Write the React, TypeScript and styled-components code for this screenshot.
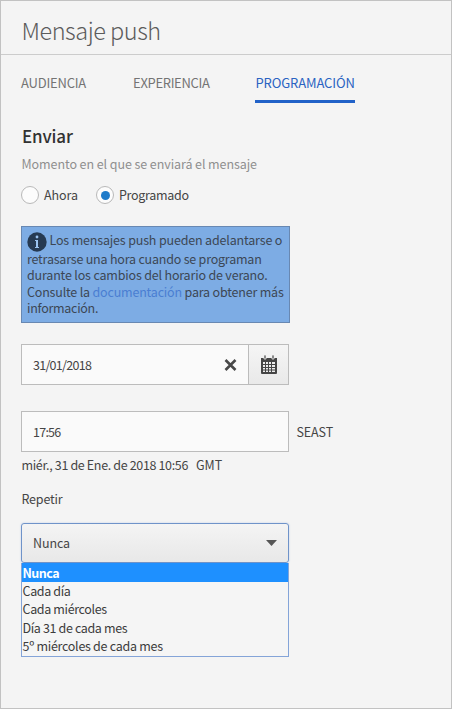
import React from "react";
import styled, { createGlobalStyle } from "styled-components";

const GlobalStyle = createGlobalStyle`
  *, *::before, *::after { box-sizing: border-box; }
  body {
    margin: 0;
    background: #f4f4f4;
    font-family: "Noto Sans CJK SC", "Source Sans Pro", "Noto Sans", sans-serif;
  }
`;

const Panel = styled.main`
  width: 452px;
  height: 709px;
  border: 1px solid #c2c2c2;
  background: #f4f4f4;
  color: #454545;
  font-size: 12.5px;
  line-height: 18px;
  overflow: hidden;
  white-space: nowrap;
`;

const Header = styled.header`
  height: 54px;
  padding: 12px 0 0 20.5px;
  border-bottom: 1px solid #cccccc;
`;

const Title = styled.h1`
  margin: 0;
  font-size: 23.5px;
  font-weight: 300;
  line-height: 34px;
  letter-spacing: -0.48px;
  color: #5c5c5c;
`;

const Tabs = styled.nav`
  display: flex;
  height: 49px;
  padding: 17px 0 0 20px;
`;

const Tab = styled.span<{ $active?: boolean; $gap: number; $tracking: number }>`
  height: 31px;
  margin-right: ${(p) => p.$gap}px;
  padding-top: 1px;
  border-bottom: ${(p) => (p.$active ? "3px solid #2162c8" : "none")};
  color: ${(p) => (p.$active ? "#2a63c2" : "#747474")};
  font-size: 13px;
  line-height: 20px;
  letter-spacing: ${(p) => p.$tracking}px;
`;

const Form = styled.section`
  display: flex;
  flex-direction: column;
  align-items: flex-start;
  padding: 20px 0 0 20px;
`;

const Heading = styled.h2`
  margin: 0 0 0 1px;
  font-size: 17px;
  font-weight: 500;
  line-height: 24px;
  letter-spacing: -0.15px;
  color: #323232;
`;

const Text = styled.span<{ $tracking?: number }>`
  letter-spacing: ${(p) => p.$tracking ?? 0}px;
`;

const Hint = styled.p`
  margin: 7px 0 0 0.5px;
  color: #8f8f8f;
  letter-spacing: -0.08px;
`;

const RadioGroup = styled.div`
  display: flex;
  height: 18px;
  margin-top: 13px;
`;

const Option = styled.label<{ $width: number }>`
  display: flex;
  width: ${(p) => p.$width}px;
  gap: 5px;
  line-height: 17px;
`;

const Radio = styled.span`
  display: flex;
  align-items: center;
  justify-content: center;
  flex: none;
  width: 18px;
  height: 18px;
  border: 1px solid #b9b9b9;
  border-radius: 50%;
  background: #fcfcfc;
`;

const Dot = styled.span`
  width: 9px;
  height: 9px;
  border-radius: 50%;
  background: #1e7bca;
`;

const Notice = styled.div`
  width: 269px;
  height: 97px;
  margin-top: 22px;
  padding: 4.5px 0 0 5px;
  border: 1px solid #6888b2;
  background: #7dace4;
  color: #3c4754;
  line-height: 16.4px;
`;

const NoticeLine = styled.div<{ $tracking: number; $first?: boolean }>`
  display: flex;
  height: ${(p) => (p.$first ? 19.4 : 16.4)}px;
  gap: ${(p) => (p.$first ? 2.5 : 0)}px;
  white-space: pre;
  letter-spacing: ${(p) => p.$tracking}px;
`;

const InfoIcon = styled.svg`
  display: block;
  flex: none;
`;

const Link = styled.a`
  color: #4a7ed2;
`;

const Field = styled.div<{ $top: number }>`
  display: flex;
  align-items: center;
  width: 268px;
  height: 41px;
  margin-top: ${(p) => p.$top}px;
  padding-left: 11px;
  border: 1px solid #bcbcbc;
  background: #fafafa;
`;

const ClearIcon = styled.svg`
  margin-left: auto;
  margin-right: 11px;
`;

const CalendarButton = styled.button`
  display: flex;
  align-items: center;
  justify-content: center;
  width: 40px;
  height: 39px;
  padding: 0;
  border: 0;
  border-left: 1px solid #bcbcbc;
  background: linear-gradient(#f5f5f5, #e9e9e9);
`;

const TimeRow = styled.div`
  display: flex;
  align-items: center;
  gap: 7.5px;
  margin-top: 26px;
`;

const Resolved = styled.div`
  display: flex;
  gap: 8px;
  margin: 4px 0 0 0.5px;
`;

const Label = styled.div`
  margin: 16px 0 0 0.5px;
  letter-spacing: -0.2px;
`;

const Select = styled.div`
  display: flex;
  align-items: center;
  justify-content: space-between;
  width: 268px;
  height: 40px;
  margin-top: 15px;
  padding: 0 11px;
  border: 1px solid #6f93c9;
  border-radius: 3px;
  background: linear-gradient(#f4f4f4, #e8e8e8);
  box-shadow: 0 0 2px #b9cbe7;
`;

const Menu = styled.ul`
  width: 268px;
  height: 94px;
  margin: 0;
  padding: 0;
  border: 1px solid #84a4d8;
  border-top: 0;
  background: #f5f5f5;
  list-style: none;
`;

const Item = styled.li<{ $selected?: boolean; $tracking: number }>`
  height: ${(p) => (p.$selected ? 19 : 18.4)}px;
  padding-left: 0.5px;
  color: ${(p) => (p.$selected ? "#ffffff" : "#3c3c3c")};
  background: ${(p) => (p.$selected ? "#1e90ff" : "transparent")};
  font-weight: ${(p) => (p.$selected ? 700 : 400)};
  line-height: ${(p) => (p.$selected ? 19 : 18)}px;
  letter-spacing: ${(p) => p.$tracking}px;
`;

const options = [
  { label: "Nunca", tracking: -0.5, selected: true },
  { label: "Cada día", tracking: -0.35 },
  { label: "Cada miércoles", tracking: -0.35 },
  { label: "Día 31 de cada mes", tracking: -0.36 },
  { label: "5º miércoles de cada mes", tracking: -0.28 },
];

export default function App() {
  return (
    <>
      <GlobalStyle />
      <Panel>
        <Header>
          <Title>Mensaje push</Title>
        </Header>
        <Tabs>
          <Tab $gap={47} $tracking={-0.2}>AUDIENCIA</Tab>
          <Tab $gap={46} $tracking={-0.34}>EXPERIENCIA</Tab>
          <Tab $active $gap={0} $tracking={-0.11}>PROGRAMACIÓN</Tab>
        </Tabs>
        <Form>
          <Heading>Enviar</Heading>
          <Hint>Momento en el que se enviará el mensaje</Hint>
          <RadioGroup>
            <Option $width={75}>
              <Radio />
              <Text $tracking={-0.1}>Ahora</Text>
            </Option>
            <Option $width={100}>
              <Radio><Dot /></Radio>
              <Text $tracking={-0.3}>Programado</Text>
            </Option>
          </RadioGroup>

          <Notice>
            <NoticeLine $first $tracking={-0.17}>
              <InfoIcon width="20" height="20" viewBox="0 0 20 20">
                <circle cx="10" cy="10" r="9.7" fill="#263a52" />
                <circle cx="10" cy="5" r="1.4" fill="#9bc3ef" />
                <path d="M8 8h3v7h1v1H8v-1h1V9H8z" fill="#9bc3ef" />
              </InfoIcon>
              <span>Los mensajes push pueden adelantarse o</span>
            </NoticeLine>
            <NoticeLine $tracking={-0.21}>retrasarse una hora cuando se programan</NoticeLine>
            <NoticeLine $tracking={-0.18}>durante los cambios del horario de verano.</NoticeLine>
            <NoticeLine $tracking={-0.19}>
              {"Consulte la "}<Link>documentación</Link>{" para obtener más"}
            </NoticeLine>
            <NoticeLine $tracking={-0.28}>información.</NoticeLine>
          </Notice>

          <Field $top={21}>
            <Text $tracking={-0.72}>31/01/2018</Text>
            <ClearIcon width="13" height="12" viewBox="0 0 13 12">
              <path d="M1.5 1 11.5 11M11.5 1 1.5 11" stroke="#484848" strokeWidth="2.6" />
            </ClearIcon>
            <CalendarButton aria-label="Calendario">
              <svg width="18" height="19" viewBox="0 0 18 19">
                <path d="M1 3h16v15q0 1-1 1H2q-1 0-1-1z" fill="#454545" />
                <path d="M4 0h2v4H4zM12 0h2v4h-2z" fill="#454545" stroke="#f3f3f3" strokeWidth="0.8" />
                <path
                  d="M3 7h2v2H3zM6 7h2v2H6zM9 7h2v2H9zM12 7h3v2h-3zM3 10h2v2H3zM6 10h2v2H6zM9 10h2v2H9zM12 10h3v2h-3zM3 13h2v1.5H3zM6 13h2v1.5H6zM9 13h2v1.5H9zM12 13h3v1.5h-3zM3 15.5h2V17H3zM6 15.5h2V17H6zM9 15.5h2V17H9zM12 15.5h3V17h-3z"
                  fill="#ececec"
                />
              </svg>
            </CalendarButton>
          </Field>

          <TimeRow>
            <Field $top={0}>
              <Text $tracking={-0.75}>17:56</Text>
            </Field>
            <Text $tracking={-0.1}>SEAST</Text>
          </TimeRow>
          <Resolved>
            <Text $tracking={-0.35}>miér., 31 de Ene. de 2018 10:56</Text>
            <Text>GMT</Text>
          </Resolved>

          <Label>Repetir</Label>
          <Select>
            <Text $tracking={-0.1}>Nunca</Text>
            <svg width="11" height="6" viewBox="0 0 11 6">
              <path d="M0 0h11L5.5 6z" fill="#565656" />
            </svg>
          </Select>
          <Menu>
            {options.map((o) => (
              <Item key={o.label} $selected={o.selected} $tracking={o.tracking}>
                {o.label}
              </Item>
            ))}
          </Menu>
        </Form>
      </Panel>
    </>
  );
}
